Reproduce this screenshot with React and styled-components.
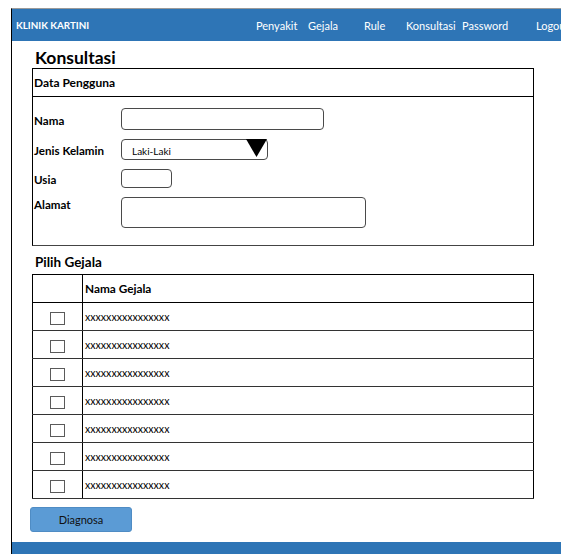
import React from 'react';
import styled, { createGlobalStyle } from 'styled-components';

const GlobalStyle = createGlobalStyle`
  html, body {
    margin: 0;
    padding: 0;
    background: #fff;
    overflow: hidden;
  }
  body {
    font-family: Lato, "Open Sans", sans-serif;
    color: #000;
  }
`;

const menu = [
  { label: 'Penyakit', width: 52 },
  { label: 'Gejala', width: 56 },
  { label: 'Rule', width: 42 },
  { label: 'Konsultasi', width: 56 },
  { label: 'Password', width: 74 },
  { label: 'Logout', width: 60 },
];

const gejala = Array.from({ length: 7 }, (_, i) => ({ id: i + 1, nama: 'xxxxxxxxxxxxxxxx' }));

function App() {
  return (
    <>
      <GlobalStyle />
      <Page>
        <Frame>
          <NavBar>
            <Brand>KLINIK KARTINI</Brand>
            {menu.map((m) => (
              <NavLink key={m.label} $w={m.width}>{m.label}</NavLink>
            ))}
          </NavBar>

          <Main>
            <Title>Konsultasi</Title>
            <Box>
              <BoxHead>Data Pengguna</BoxHead>
              <Form>
                <Label>Nama</Label>
                <Field $w={203} $h={22} />

                <Label>Jenis Kelamin</Label>
                <Select>
                  <span>Laki-Laki</span>
                  <svg width="21" height="18" viewBox="0 0 21 18">
                    <polygon points="0,0 21,0 10.5,18" fill="#000" />
                  </svg>
                </Select>

                <Label>Usia</Label>
                <Field $w={51} $h={19} />

                <Label $top>Alamat</Label>
                <Field $w={245} $h={31} />
              </Form>
            </Box>

            <SubTitle>Pilih Gejala</SubTitle>
            <Table>
              <thead>
                <tr>
                  <CheckHead />
                  <Th>Nama Gejala</Th>
                </tr>
              </thead>
              <tbody>
                {gejala.map((g) => (
                  <tr key={g.id}>
                    <CheckCell><Check /></CheckCell>
                    <Td>{g.nama}</Td>
                  </tr>
                ))}
              </tbody>
            </Table>

            <Button>Diagnosa</Button>
          </Main>

          <Footer />
        </Frame>
      </Page>
    </>
  );
}

const Page = styled.div`
  padding: 8px 0 0 11px;
  height: 554px;
  box-sizing: border-box;
`;

const Frame = styled.div`
  width: 620px;
  height: 546px;
  border-top: 1px solid #9a9a9a;
  border-left: 1px solid #000;
  display: flex;
  flex-direction: column;
  box-sizing: border-box;
`;

const NavBar = styled.nav`
  height: 32px;
  background: #2e75b6;
  color: #fff;
  display: flex;
  align-items: center;
  padding-left: 4px;
`;

const Brand = styled.div`
  width: 240px;
  flex: none;
  font-weight: 700;
  font-size: 9.8px;
`;

const NavLink = styled.span`
  width: ${(p) => p.$w}px;
  flex: none;
  font-size: 11px;
`;

const Main = styled.main`
  padding-left: 20px;
  display: flex;
  flex-direction: column;
  align-items: flex-start;
`;

const Title = styled.h1`
  margin: 7px 0 0 3px;
  font-size: 17.5px;
  line-height: 20px;
  font-weight: 700;
`;

const Box = styled.section`
  width: 502px;
  border: 1px solid #000;
  border-bottom-color: #444;
  box-sizing: border-box;
`;

const BoxHead = styled.div`
  height: 27px;
  border-bottom: 1px solid #000;
  display: flex;
  align-items: center;
  padding-left: 1px;
  font-size: 12px;
  font-weight: 700;
`;

const Form = styled.div`
  display: grid;
  grid-template-columns: 87px auto;
  justify-content: start;
  row-gap: 9px;
  padding: 11px 0 17px 1px;
`;

const Label = styled.label`
  font-size: 11.6px;
  font-weight: 700;
  align-self: ${(p) => (p.$top ? 'start' : 'center')};
  padding-top: ${(p) => (p.$top ? '1px' : '2px')};
`;

const Field = styled.div`
  width: ${(p) => p.$w}px;
  height: ${(p) => p.$h}px;
  border: 1px solid #4a4a4a;
  border-radius: 4px;
  box-sizing: border-box;
`;

const Select = styled.div`
  width: 147px;
  height: 21px;
  border: 1px solid #4a4a4a;
  border-radius: 4px;
  box-sizing: border-box;
  display: flex;
  align-items: center;
  justify-content: space-between;
  padding: 0 0 0 10px;
  font-size: 10px;

  span {
    padding-top: 2px;
  }

  svg {
    align-self: flex-start;
    margin-top: -1px;
  }
`;

const SubTitle = styled.h2`
  margin: 7px 0 0 3px;
  font-size: 13.5px;
  line-height: 18px;
  font-weight: 700;
`;

const Table = styled.table`
  width: 502px;
  margin-top: 3px;
  border-collapse: collapse;
  border: 1px solid #000;
`;

const Th = styled.th`
  height: 27px;
  padding: 0 0 0 2px;
  border: 1px solid #000;
  text-align: left;
  font-size: 11.8px;
  font-weight: 700;
`;

const CheckHead = styled(Th)`
  width: 49px;
  padding: 0;
`;

const CheckCell = styled.td`
  height: 27px;
  padding: 0;
  border: 1px solid #000;
  border-bottom-color: #333;
  text-align: center;
  vertical-align: middle;
`;

const Check = styled.span`
  display: inline-block;
  width: 15px;
  height: 13px;
  border: 1px solid #5a5a5a;
  box-sizing: border-box;
  vertical-align: middle;
`;

const Td = styled.td`
  padding: 0 0 0 2px;
  border: 1px solid #000;
  border-bottom-color: #333;
  font-size: 10.6px;
  vertical-align: middle;
`;

const Button = styled.button`
  margin: 8px 0 0 -2px;
  width: 102px;
  height: 25px;
  background: #5b9bd5;
  border: 1px solid #4f8cc4;
  border-radius: 3px;
  font-family: inherit;
  font-size: 11px;
  color: #111;
  padding: 0;
`;

const Footer = styled.footer`
  margin-top: auto;
  height: 12px;
  background: #2e75b6;
`;

export default App;
